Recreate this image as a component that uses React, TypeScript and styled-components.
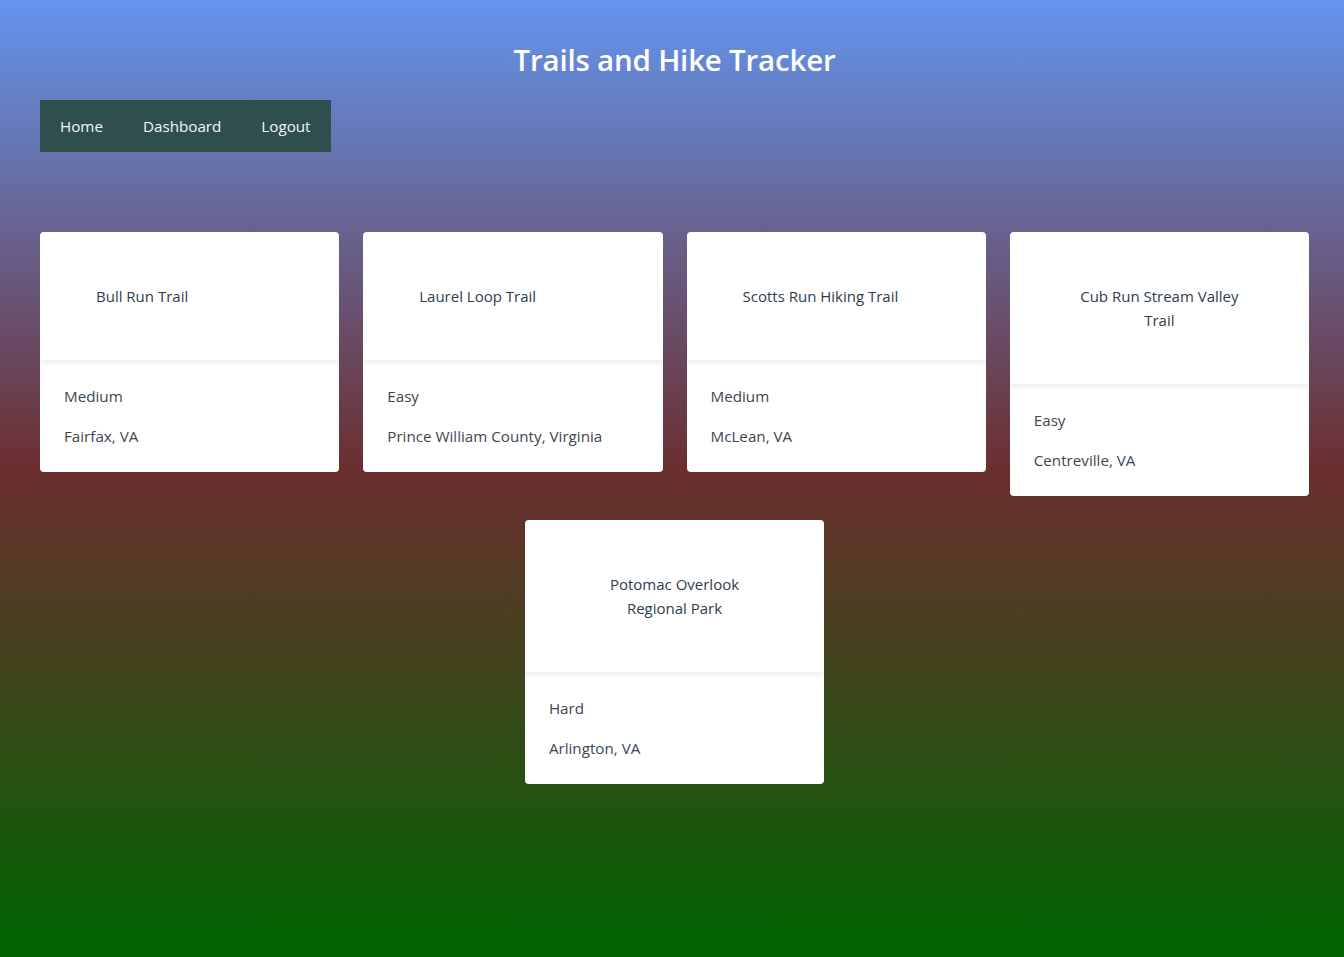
import React from "react";
import styled, { createGlobalStyle } from "styled-components";

const GlobalStyle = createGlobalStyle`
  html, body {
    margin: 0;
    padding: 0;
  }
  body {
    font-family: "Open Sans", "Noto Sans", sans-serif;
    min-height: 957px;
    background: linear-gradient(to bottom, #6495ed 0%, #6b2e2f 49%, #006400 100%);
    background-attachment: fixed;
  }
`;

const Page = styled.div`
  min-height: 957px;
  padding: 40px 35px 40px 40px;
  box-sizing: border-box;
`;

const Title = styled.h1`
  margin: 0 0 20px;
  height: 40px;
  line-height: 40px;
  text-align: center;
  color: #ffffff;
  font-size: 29.5px;
  font-weight: 600;
  letter-spacing: -0.2px;
`;

const Nav = styled.nav`
  display: flex;
  width: fit-content;
  align-items: center;
  height: 52px;
  background: #2f4f4f;
`;

const NavLink = styled.a`
  padding: 0 20px;
  color: #f5f5f5;
  font-size: 15.2px;
  text-decoration: none;
  line-height: 52px;
  cursor: pointer;
`;

const CardGrid = styled.div`
  display: flex;
  flex-wrap: wrap;
  justify-content: center;
  align-items: flex-start;
  gap: 24px;
  margin-top: 80px;
`;

const Card = styled.div`
  flex: 0 0 calc((100% - 72px) / 4);
  background: #ffffff;
  border-radius: 4px;
  overflow: hidden;
`;

const CardHeader = styled.div`
  display: flex;
  padding: 52px 56px;
  box-shadow: 0 3px 5px rgba(0, 0, 0, 0.07);
  position: relative;
`;

const CardTitle = styled.span`
  text-align: center;
  font-size: 15px;
  line-height: 24px;
  color: #2c3e50;
`;

const CardBody = styled.div`
  display: flex;
  flex-direction: column;
  gap: 16px;
  padding: 24px;
`;

const CardText = styled.p`
  margin: 0;
  font-size: 15.2px;
  line-height: 24px;
  color: #3d4650;
`;

const trails = [
  { name: "Bull Run Trail", difficulty: "Medium", location: "Fairfax, VA" },
  { name: "Laurel Loop Trail", difficulty: "Easy", location: "Prince William County, Virginia" },
  { name: "Scotts Run Hiking Trail", difficulty: "Medium", location: "McLean, VA" },
  { name: "Cub Run Stream Valley Trail", difficulty: "Easy", location: "Centreville, VA" },
  { name: "Potomac Overlook Regional Park", difficulty: "Hard", location: "Arlington, VA" },
];

export default function App() {
  return (
    <>
      <GlobalStyle />
      <Page>
        <Title>Trails and Hike Tracker</Title>
        <Nav>
          <NavLink>Home</NavLink>
          <NavLink>Dashboard</NavLink>
          <NavLink>Logout</NavLink>
        </Nav>
        <CardGrid>
          {trails.map((t) => (
            <Card key={t.name}>
              <CardHeader>
                <CardTitle>{t.name}</CardTitle>
              </CardHeader>
              <CardBody>
                <CardText>{t.difficulty}</CardText>
                <CardText>{t.location}</CardText>
              </CardBody>
            </Card>
          ))}
        </CardGrid>
      </Page>
    </>
  );
}
